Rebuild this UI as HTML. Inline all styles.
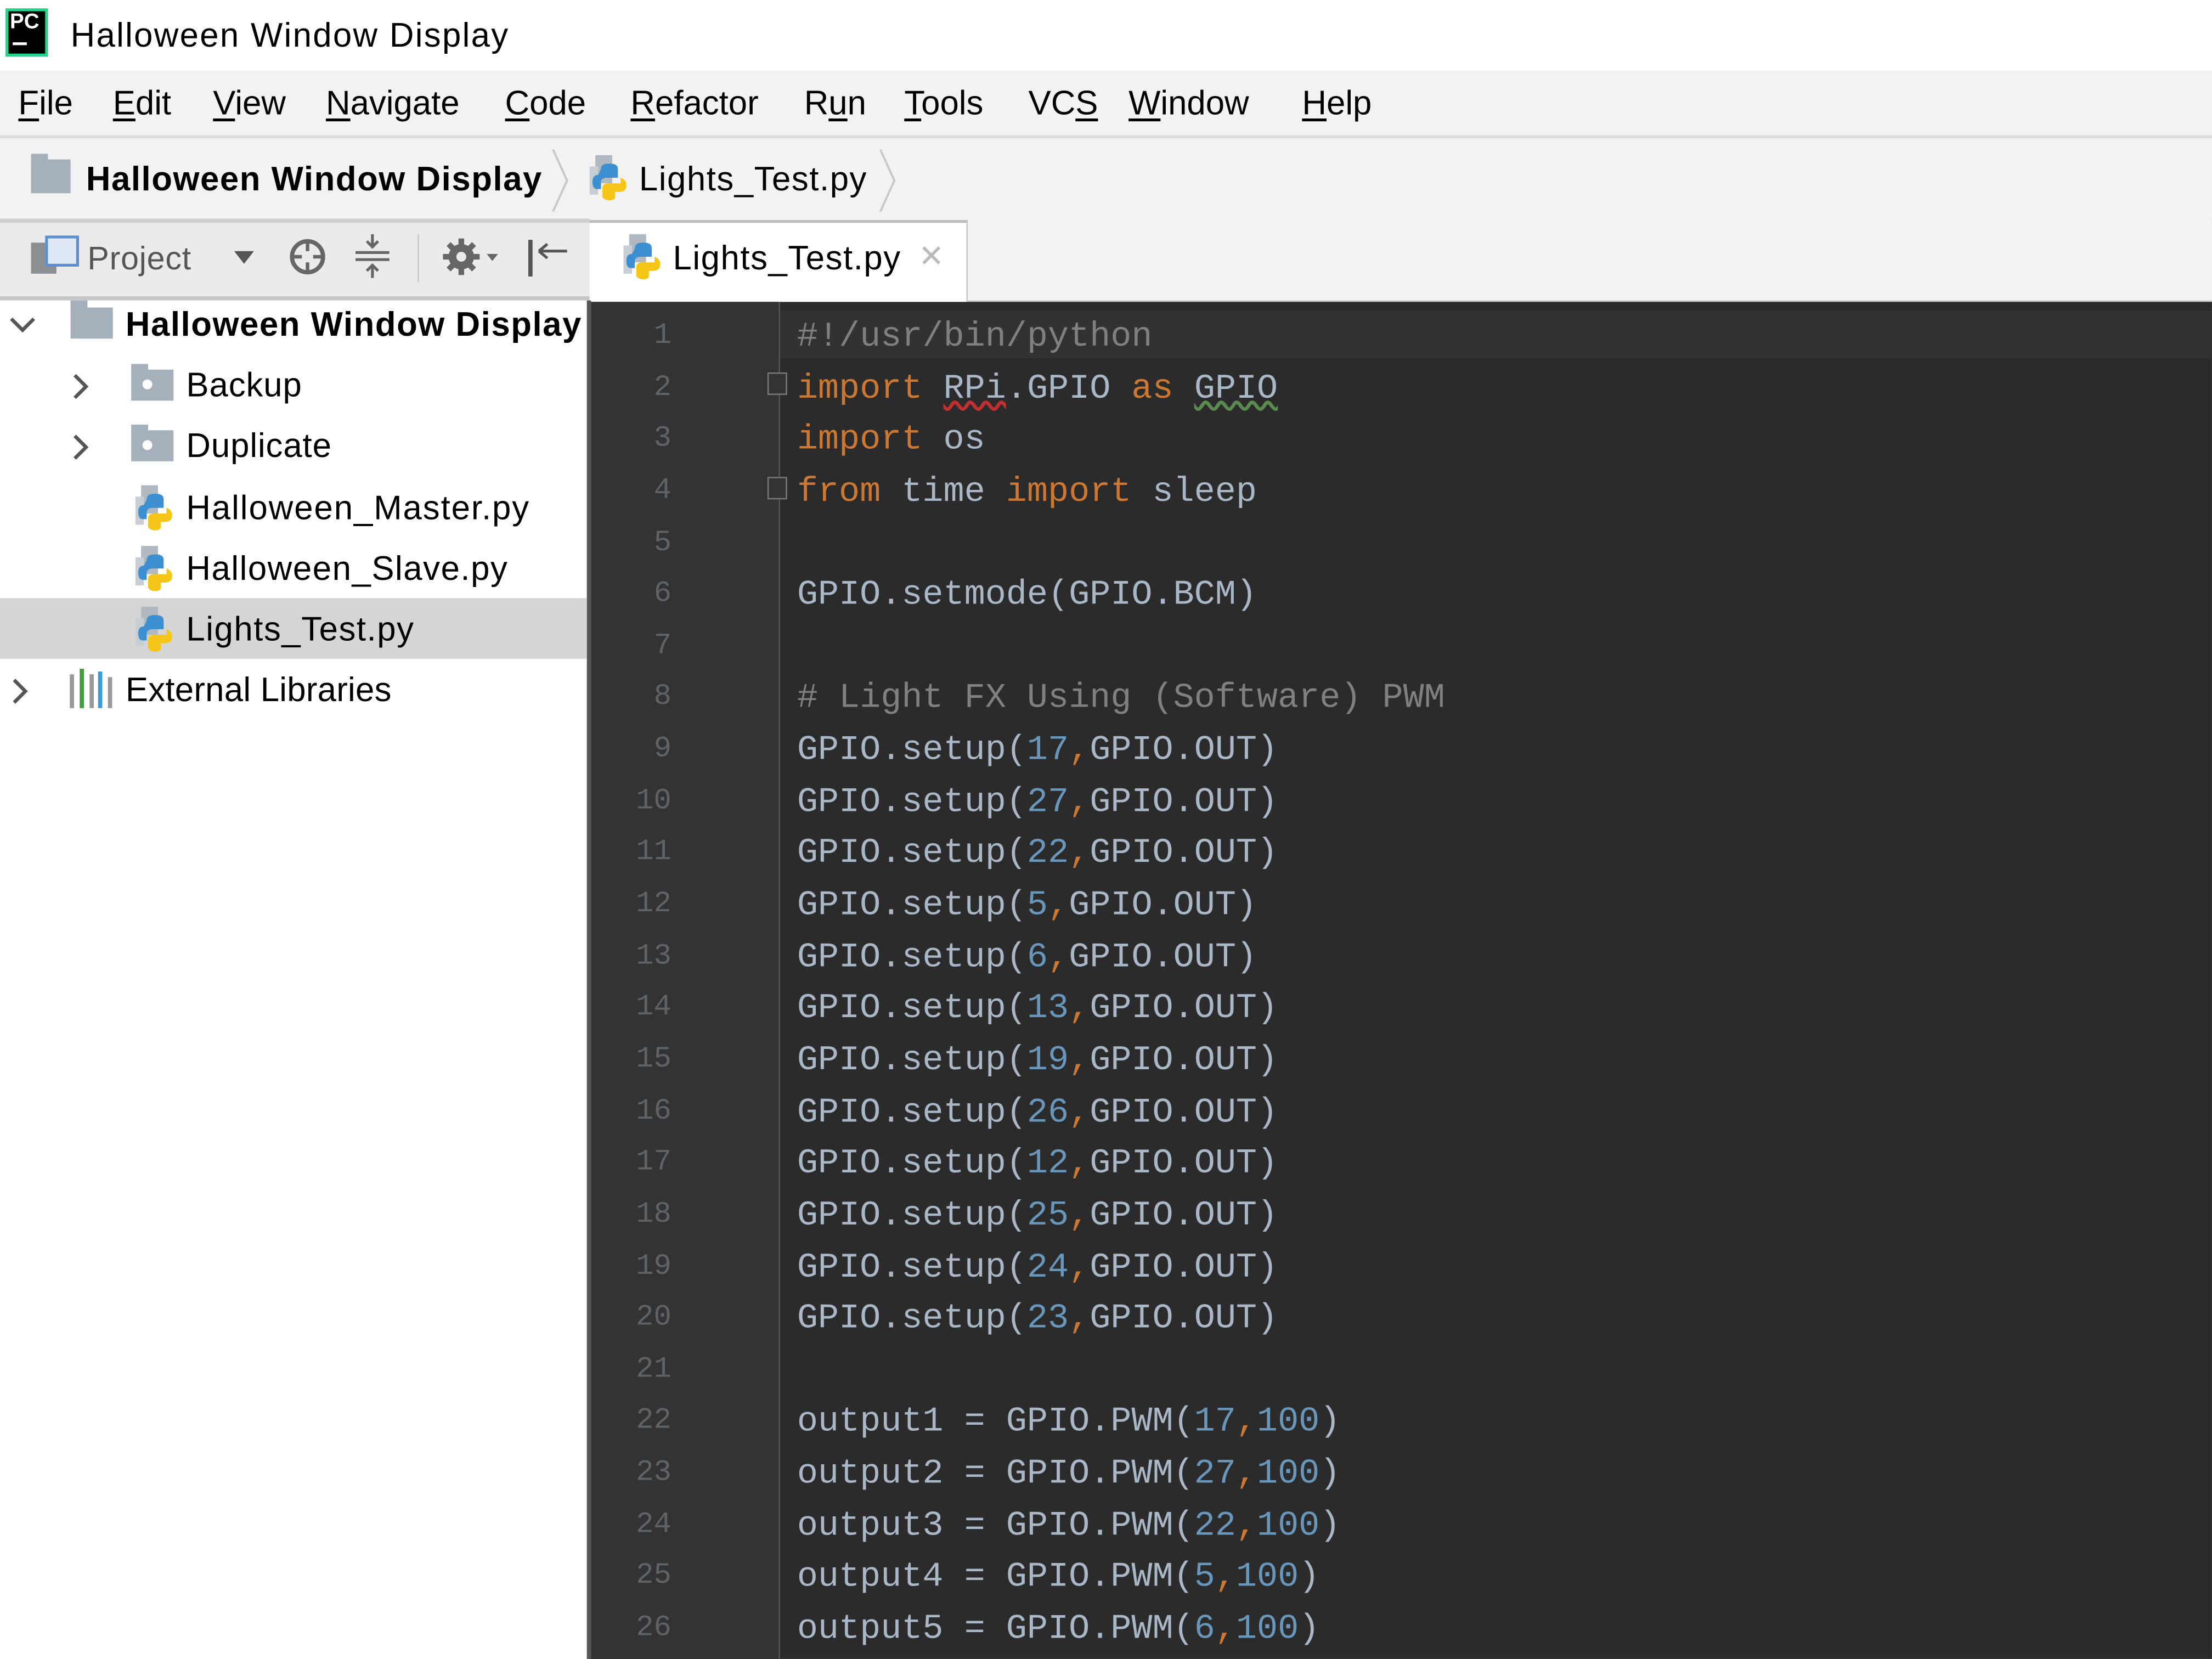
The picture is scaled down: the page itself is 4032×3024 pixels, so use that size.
<!DOCTYPE html>
<html><head><meta charset="utf-8"><style>
html,body{margin:0;padding:0;width:4032px;height:3024px;overflow:hidden;background:#fff}
#s{position:absolute;left:0;top:0;width:1568px;height:1176px;transform:scale(2.5714);transform-origin:0 0;font-family:"Liberation Sans",sans-serif;color:#000}
.a{position:absolute;white-space:nowrap}
.row{position:absolute;left:0;width:416px;height:43px}
.code{position:absolute;left:565px;font-family:"Liberation Mono",monospace;font-size:24.7px;color:#a9b7c6;white-space:pre;line-height:36.64px}
.ln{position:absolute;left:420px;width:56px;text-align:right;font-family:"Liberation Mono",monospace;font-size:21px;color:#606366;line-height:36.64px}
.k{color:#cc7832}.n{color:#6897bb}.c{color:#808080}
u{text-decoration:underline;text-underline-offset:3px}
.t{font-size:24px;letter-spacing:0.35px}
.b{font-size:24px;font-weight:bold;letter-spacing:0.6px}
</style></head><body><div id="s">
<!-- title bar -->
<div class="a" style="left:4px;top:6px;width:30px;height:34px;background:#000;border:2px solid #21d789;box-sizing:border-box"></div>
<div class="a" style="left:7px;top:7px;color:#fff;font-size:15px;font-weight:bold">PC</div>
<div class="a" style="left:9px;top:30px;width:10px;height:2px;background:#fff"></div>
<div class="a" style="left:50px;top:12px;font-size:24px;letter-spacing:0.9px">Halloween Window Display</div>
<!-- menu -->
<div class="a" style="left:0;top:50px;width:1568px;height:46px;background:#f2f2f2;border-bottom:2px solid #dcdcdc"></div>
<div class="a" style="left:13px;top:60px;font-size:24px;letter-spacing:0px">
<span style="position:absolute;left:0"><u>F</u>ile</span><span style="position:absolute;left:67px"><u>E</u>dit</span><span style="position:absolute;left:138px"><u>V</u>iew</span><span style="position:absolute;left:218px"><u>N</u>avigate</span><span style="position:absolute;left:345px"><u>C</u>ode</span><span style="position:absolute;left:434px"><u>R</u>efactor</span><span style="position:absolute;left:557px">R<u>u</u>n</span><span style="position:absolute;left:628px"><u>T</u>ools</span><span style="position:absolute;left:716px">VC<u>S</u></span><span style="position:absolute;left:787px"><u>W</u>indow</span><span style="position:absolute;left:910px"><u>H</u>elp</span></div>
<!-- breadcrumb -->
<div class="a" style="left:0;top:98px;width:1568px;height:57px;background:#f2f2f2;border-bottom:3px solid #d0d0d0"></div>
<div class="a" style="left:22px;top:113px;width:28px;height:24px;background:#a5b0ba"></div>
<div class="a" style="left:22px;top:109px;width:12px;height:6px;background:#a5b0ba"></div>
<div class="a b" style="left:61px;top:114px">Halloween Window Display</div>
<svg class="a" style="left:388px;top:104px" width="20" height="48"><path d="M4 2 L14 24 L4 46" stroke="#c8c8c8" fill="none" stroke-width="1.5"/></svg>
<svg class="a" style="left:416px;top:108px" width="32" height="34" viewBox="0 0 32 34"><path d="M6 2h12v20H6z" fill="#b0b8c0"/><path d="M2 10h6v20H2z" fill="#c8ced4"/><path d="M10 12c0-3 2-4 6-4s6 1 6 4v6h-8c-2 0-4 1-4 3v5h-3c-2 0-3-2-3-5s1-5 4-5z" fill="#3c8fd0"/><path d="M24 18c0 0 4 1 4 5s-2 5-6 5h-2v4c0 1-2 2-4 2s-5-1-5-3v-6c0-2 2-3 4-3h9z" fill="#f5c518"/></svg>
<div class="a t" style="left:453px;top:114px;letter-spacing:0.6px">Lights_Test.py</div>
<svg class="a" style="left:620px;top:104px" width="20" height="48"><path d="M4 2 L14 24 L4 46" stroke="#c8c8c8" fill="none" stroke-width="1.5"/></svg>
<!-- project toolbar -->
<div class="a" style="left:0;top:158px;width:418px;height:52px;background:#ebebeb;border-bottom:3px solid #c6c6c6"></div>
<div class="a" style="left:22px;top:172px;width:18px;height:22px;background:#8a8f94"></div>
<div class="a" style="left:32px;top:167px;width:20px;height:18px;border:2px solid #5b8fcf;background:#dfe9f5"></div>
<div class="a" style="left:62px;top:170px;font-size:23px;color:#555;letter-spacing:0.3px">Project</div>
<div class="a" style="left:166px;top:178px;width:0;height:0;border-left:7px solid transparent;border-right:7px solid transparent;border-top:9px solid #555"></div>
<svg class="a" style="left:203px;top:167px" width="30" height="30"><circle cx="15" cy="15" r="11" stroke="#666" stroke-width="3" fill="none"/><path d="M15 4v7M15 19v7M4 15h7M19 15h7" stroke="#666" stroke-width="2.5"/></svg>
<svg class="a" style="left:250px;top:164px" width="28" height="34"><path d="M2 15h24M2 20h24M14 2v9M14 24v9M10 7l4 4 4-4M10 28l4-4 4 4" stroke="#666" stroke-width="2" fill="none"/></svg>
<div class="a" style="left:296px;top:166px;width:1px;height:34px;background:#c8c8c8"></div>
<svg class="a" style="left:313px;top:166px" width="46" height="32"><circle cx="14" cy="16" r="9" fill="#666"/><path d="M14 3v26M1 16h26M5 7l18 18M23 7L5 25" stroke="#666" stroke-width="4"/><circle cx="14" cy="16" r="3.5" fill="#ebebeb"/><path d="M32 14l4 5 4-5z" fill="#666"/></svg>
<svg class="a" style="left:372px;top:166px" width="32" height="32"><path d="M4 4v26" stroke="#555" stroke-width="3"/><path d="M10 12h20M10 12l6-5M10 12l6 5" stroke="#555" stroke-width="2" fill="none"/></svg>
<!-- tab area -->
<div class="a" style="left:418px;top:155px;width:1150px;height:58px;background:#f2f2f2;border-bottom:3px solid #c6c6c6"></div>
<div class="a" style="left:418px;top:156px;width:268px;height:60px;background:#fff;border-right:1px solid #c6c6c6;border-top:2px solid #bcbcbc;box-sizing:border-box"></div>
<svg class="a" style="left:440px;top:164px" width="32" height="34" viewBox="0 0 32 34"><path d="M6 2h12v20H6z" fill="#b0b8c0"/><path d="M2 10h6v20H2z" fill="#c8ced4"/><path d="M10 12c0-3 2-4 6-4s6 1 6 4v6h-8c-2 0-4 1-4 3v5h-3c-2 0-3-2-3-5s1-5 4-5z" fill="#3c8fd0"/><path d="M24 18c0 0 4 1 4 5s-2 5-6 5h-2v4c0 1-2 2-4 2s-5-1-5-3v-6c0-2 2-3 4-3h9z" fill="#f5c518"/></svg>
<div class="a t" style="left:477px;top:170px;letter-spacing:0.6px">Lights_Test.py</div>
<div class="a" style="left:651px;top:169px;font-size:22px;color:#bbb">✕</div>
<!-- project tree -->
<div class="a" style="left:0;top:213px;width:416px;height:963px;background:#fff"></div>
<div class="a" style="left:416px;top:213px;width:3px;height:963px;background:#555"></div>
<div class="row" style="top:424px;background:#d5d5d5"></div>
<svg class="a" style="left:6px;top:223px" width="20" height="16"><path d="M2 3l8 8 8-8" stroke="#555" stroke-width="2.5" fill="none"/></svg>
<div class="a" style="left:50px;top:218px;width:30px;height:22px;background:#a5b0ba"></div><div class="a" style="left:50px;top:213px;width:12px;height:6px;background:#a5b0ba"></div>
<div class="a b" style="left:89px;top:217px">Halloween Window Display</div>
<svg class="a" style="left:50px;top:264px" width="16" height="20"><path d="M3 2l8 8-8 8" stroke="#555" stroke-width="2.5" fill="none"/></svg>
<div class="a" style="left:93px;top:262px;width:30px;height:22px;background:#a5b0ba"></div><div class="a" style="left:93px;top:258px;width:12px;height:6px;background:#a5b0ba"></div><div class="a" style="left:101px;top:269px;width:7px;height:7px;background:#fff;border-radius:50%"></div>
<div class="a t" style="left:132px;top:260px">Backup</div>
<svg class="a" style="left:50px;top:307px" width="16" height="20"><path d="M3 2l8 8-8 8" stroke="#555" stroke-width="2.5" fill="none"/></svg>
<div class="a" style="left:93px;top:305px;width:30px;height:22px;background:#a5b0ba"></div><div class="a" style="left:93px;top:301px;width:12px;height:6px;background:#a5b0ba"></div><div class="a" style="left:101px;top:312px;width:7px;height:7px;background:#fff;border-radius:50%"></div>
<div class="a t" style="left:132px;top:303px">Duplicate</div>
<svg class="a" style="left:94px;top:342px" width="32" height="34" viewBox="0 0 32 34"><path d="M6 2h12v20H6z" fill="#b0b8c0"/><path d="M2 10h6v20H2z" fill="#c8ced4"/><path d="M10 12c0-3 2-4 6-4s6 1 6 4v6h-8c-2 0-4 1-4 3v5h-3c-2 0-3-2-3-5s1-5 4-5z" fill="#3c8fd0"/><path d="M24 18c0 0 4 1 4 5s-2 5-6 5h-2v4c0 1-2 2-4 2s-5-1-5-3v-6c0-2 2-3 4-3h9z" fill="#f5c518"/></svg>
<div class="a t" style="left:132px;top:347px;letter-spacing:0.75px">Halloween_Master.py</div>
<svg class="a" style="left:94px;top:385px" width="32" height="34" viewBox="0 0 32 34"><path d="M6 2h12v20H6z" fill="#b0b8c0"/><path d="M2 10h6v20H2z" fill="#c8ced4"/><path d="M10 12c0-3 2-4 6-4s6 1 6 4v6h-8c-2 0-4 1-4 3v5h-3c-2 0-3-2-3-5s1-5 4-5z" fill="#3c8fd0"/><path d="M24 18c0 0 4 1 4 5s-2 5-6 5h-2v4c0 1-2 2-4 2s-5-1-5-3v-6c0-2 2-3 4-3h9z" fill="#f5c518"/></svg>
<div class="a t" style="left:132px;top:390px;letter-spacing:0.6px">Halloween_Slave.py</div>
<svg class="a" style="left:94px;top:428px" width="32" height="34" viewBox="0 0 32 34"><path d="M6 2h12v20H6z" fill="#b0b8c0"/><path d="M2 10h6v20H2z" fill="#c8ced4"/><path d="M10 12c0-3 2-4 6-4s6 1 6 4v6h-8c-2 0-4 1-4 3v5h-3c-2 0-3-2-3-5s1-5 4-5z" fill="#3c8fd0"/><path d="M24 18c0 0 4 1 4 5s-2 5-6 5h-2v4c0 1-2 2-4 2s-5-1-5-3v-6c0-2 2-3 4-3h9z" fill="#f5c518"/></svg>
<div class="a t" style="left:132px;top:433px;letter-spacing:0.6px">Lights_Test.py</div>
<svg class="a" style="left:7px;top:480px" width="16" height="20"><path d="M3 2l8 8-8 8" stroke="#555" stroke-width="2.5" fill="none"/></svg>
<svg class="a" style="left:48px;top:474px" width="34" height="28"><path d="M3 4v24" stroke="#999" stroke-width="3"/><path d="M10 0v28" stroke="#40a040" stroke-width="3"/><path d="M17 4v24" stroke="#999" stroke-width="3"/><path d="M23 2v26" stroke="#3b9ad8" stroke-width="3"/><path d="M30 6v22" stroke="#999" stroke-width="3"/></svg>
<div class="a t" style="left:89px;top:476px;letter-spacing:0.1px">External Libraries</div>
<!-- editor -->
<div class="a" style="left:419px;top:214px;width:1149px;height:962px;background:#2b2b2b"></div>
<div class="a" style="left:419px;top:214px;width:133px;height:962px;background:#313335"></div>
<div class="a" style="left:552px;top:214px;width:1px;height:962px;background:#555"></div>
<div class="a" style="left:553px;top:220px;width:1015px;height:34px;background:#323232"></div>
<div class="a" style="left:544px;top:264px;width:14px;height:16px;border:1px solid #777;box-sizing:border-box;background:#313335"></div>
<div class="a" style="left:544px;top:338px;width:14px;height:16px;border:1px solid #777;box-sizing:border-box;background:#313335"></div>
<div class="ln" style="top:221px">1<br>2<br>3<br>4<br>5<br>6<br>7<br>8<br>9<br>10<br>11<br>12<br>13<br>14<br>15<br>16<br>17<br>18<br>19<br>20<br>21<br>22<br>23<br>24<br>25<br>26</div>
<div class="code" style="top:221px"><span class="c">#!/usr/bin/python</span>
<span class="k">import</span> <span style="text-decoration:underline wavy #c03030">RPi</span>.GPIO <span class="k">as</span> <span style="text-decoration:underline wavy #5a8a50">GPIO</span>
<span class="k">import</span> os
<span class="k">from</span> time <span class="k">import</span> sleep

GPIO.setmode(GPIO.BCM)

<span class="c"># Light FX Using (Software) PWM</span>
GPIO.setup(<span class="n">17</span><span class="k">,</span>GPIO.OUT)
GPIO.setup(<span class="n">27</span><span class="k">,</span>GPIO.OUT)
GPIO.setup(<span class="n">22</span><span class="k">,</span>GPIO.OUT)
GPIO.setup(<span class="n">5</span><span class="k">,</span>GPIO.OUT)
GPIO.setup(<span class="n">6</span><span class="k">,</span>GPIO.OUT)
GPIO.setup(<span class="n">13</span><span class="k">,</span>GPIO.OUT)
GPIO.setup(<span class="n">19</span><span class="k">,</span>GPIO.OUT)
GPIO.setup(<span class="n">26</span><span class="k">,</span>GPIO.OUT)
GPIO.setup(<span class="n">12</span><span class="k">,</span>GPIO.OUT)
GPIO.setup(<span class="n">25</span><span class="k">,</span>GPIO.OUT)
GPIO.setup(<span class="n">24</span><span class="k">,</span>GPIO.OUT)
GPIO.setup(<span class="n">23</span><span class="k">,</span>GPIO.OUT)

output1 = GPIO.PWM(<span class="n">17</span><span class="k">,</span><span class="n">100</span>)
output2 = GPIO.PWM(<span class="n">27</span><span class="k">,</span><span class="n">100</span>)
output3 = GPIO.PWM(<span class="n">22</span><span class="k">,</span><span class="n">100</span>)
output4 = GPIO.PWM(<span class="n">5</span><span class="k">,</span><span class="n">100</span>)
output5 = GPIO.PWM(<span class="n">6</span><span class="k">,</span><span class="n">100</span>)</div>
</div></body></html>
